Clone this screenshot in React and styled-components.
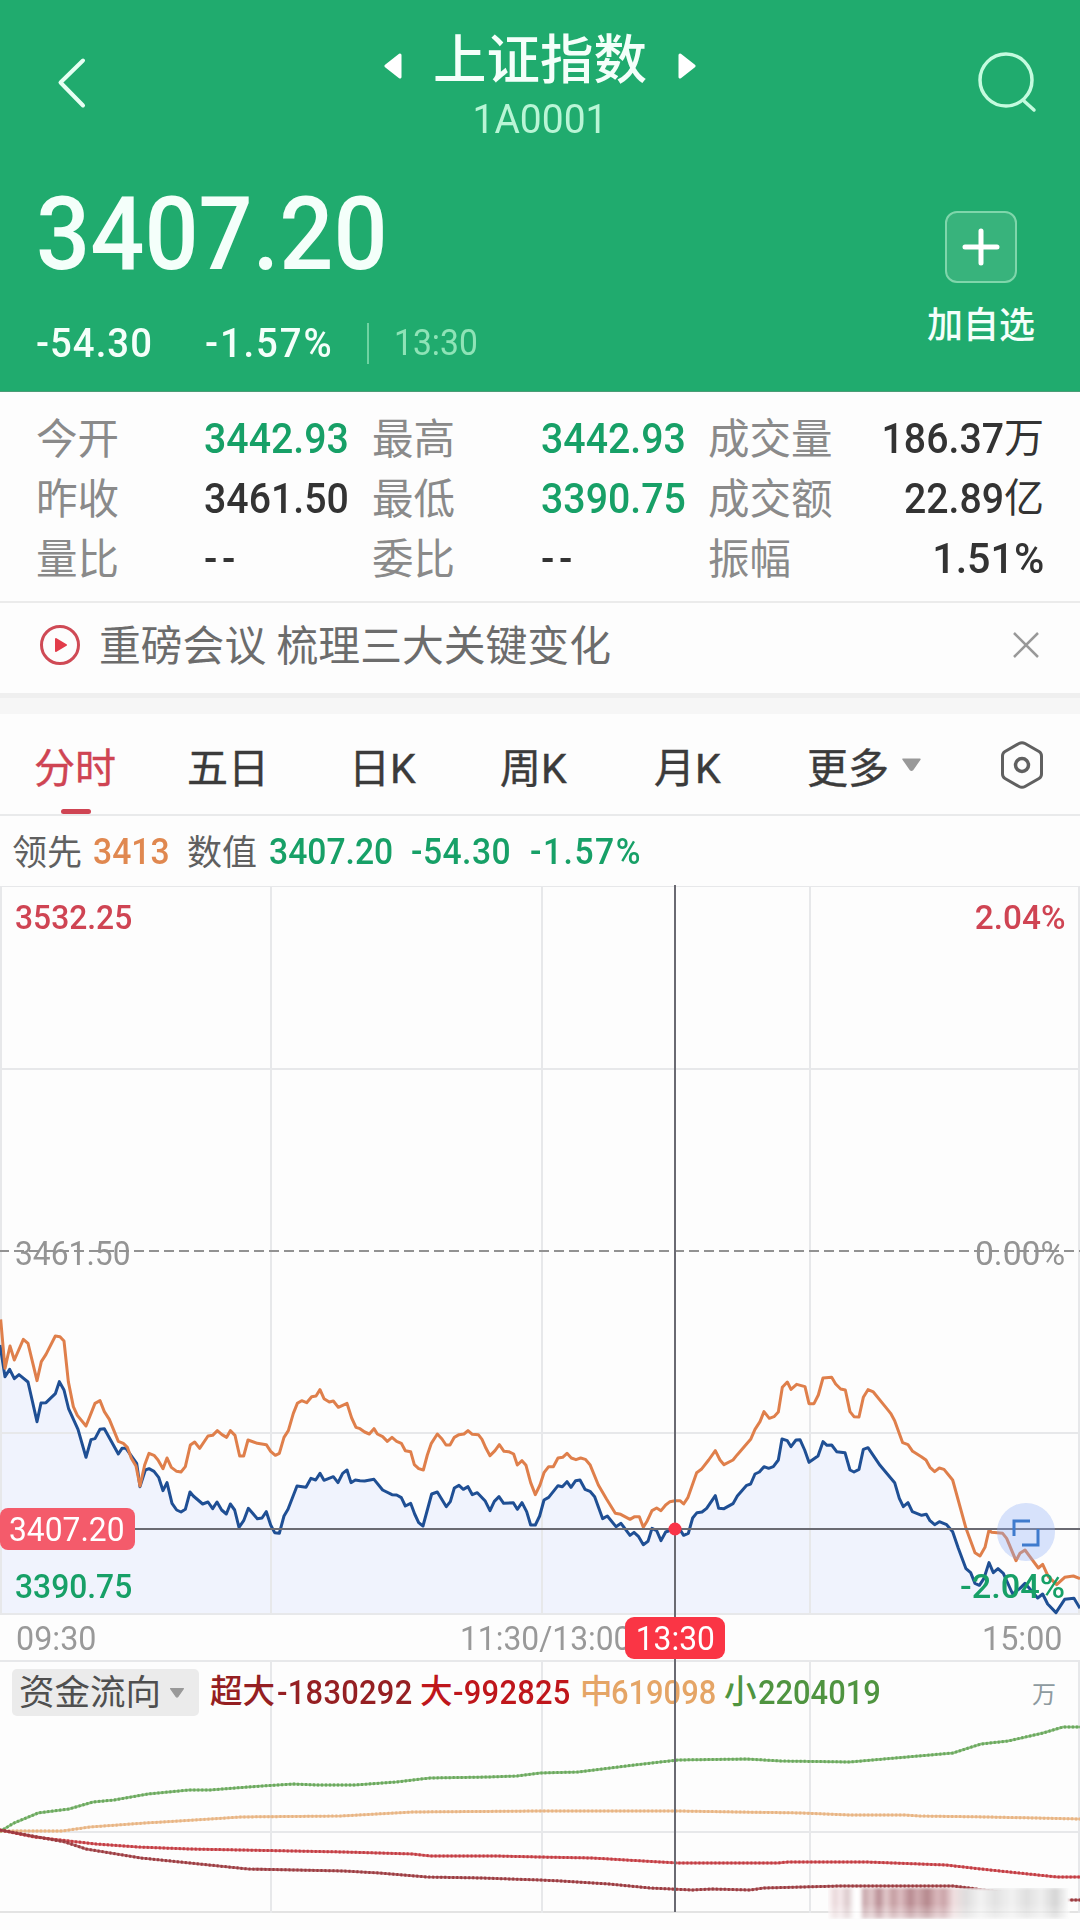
import React from "react";
import styled, { createGlobalStyle, css } from "styled-components";

const GlobalStyle = createGlobalStyle`
  * {
    box-sizing: border-box;
  }
  body {
    margin: 0;
    background: #fdfdfd;
    font-family: Roboto, "Noto Sans CJK SC", sans-serif;
    -webkit-font-smoothing: antialiased;
  }
`;

const colors = {
  green: "#20ab6e",
  down: "#17a067",
  up: "#cf4453",
  red: "#fa3545",
  text: "#333",
  gray: "#8a8a8a",
  orange: "#e08850",
  blue: "#1f4f94",
  line: "#e7e8ea",
};

const Page = styled.main`
  width: 1080px;
  height: 1930px;
  overflow: hidden;
  background: #fdfdfd;
`;

// 숫자 narrow digits, close to DIN
const Num = styled.span`
  display: block;
  font-family: Roboto, sans-serif;
  font-size: ${(p) => p.$size || 42}px;
  font-weight: ${(p) => p.$weight || 500};
  letter-spacing: ${(p) => p.$gap || 0}px;
  line-height: 1;
  white-space: nowrap;
  color: ${(p) => p.$color || "inherit"};
  transform: scaleX(${(p) => p.$scale || 0.935});
  transform-origin: ${(p) => p.$origin || "left"} center;
`;

/* ---------- header ---------- */
const Header = styled.header`
  height: 392px;
  background: ${colors.green};
  border-bottom: 1px solid #4b9c76;
  color: #f4fffa;
`;

const NavBar = styled.div`
  display: grid;
  grid-template-columns: 384px 312px 384px;
  height: 162px;
`;

const BackIcon = styled.svg`
  margin: 56px 0 0 54px;
`;

const SearchIcon = styled.svg`
  margin: 48px 0 0 282px;
`;

const TitleBlock = styled.div`
  padding-top: 28px;
  text-align: center;
`;

const TitleRow = styled.div`
  display: flex;
  align-items: center;
  justify-content: space-between;
  height: 66px;

  svg {
    margin-top: 10px;
  }
`;

const Title = styled.h1`
  margin: 0;
  font-size: 53.5px;
  font-weight: 500;
  line-height: 66px;
`;

const Code = styled.div`
  display: flex;
  justify-content: center;
  margin-top: 5px;
  color: #b9f5d6;
`;

const PriceArea = styled.div`
  display: flex;
  justify-content: space-between;
  padding: 0 38px 0 36px;
`;

const Price = styled.div`
  height: 159px;
  padding-top: 21px;
`;

const ChangeRow = styled.div`
  display: grid;
  grid-template-columns: 169px 162px 27px auto;
  align-items: center;
  height: 44px;
`;

const Divider = styled.i`
  width: 2px;
  height: 41px;
  background: #6fd3a2;
`;

const AddWatch = styled.div`
  display: flex;
  flex-direction: column;
  align-items: center;
  width: 122px;
  padding-top: 49px;
  font-size: 36px;
  font-weight: 500;
  line-height: 48px;
`;

const AddBox = styled.div`
  display: flex;
  align-items: center;
  justify-content: center;
  width: 72px;
  height: 72px;
  margin-bottom: 19px;
  border: 2px solid #7fd6ab;
  border-radius: 12px;
  background: #38b37c;
`;

/* ---------- stats ---------- */
const Stats = styled.section`
  display: grid;
  grid-template-columns: 168px 168px 169px 167px 135px 201px;
  grid-template-rows: repeat(3, 60px);
  align-items: center;
  height: 211px;
  padding: 17px 36px 0;
  border-bottom: 2px solid #ebebeb;
`;

const StatLabel = styled.span`
  padding-top: 2px;
  font-size: 41.5px;
  line-height: 60px;
  color: ${colors.gray};
`;

const StatValue = styled.div`
  display: flex;
  align-items: center;
  justify-content: ${(p) => (p.$right ? "flex-end" : "flex-start")};
  height: 60px;
  font-size: 40px;
  line-height: 60px;
  color: ${(p) => (p.$down ? colors.down : colors.text)};
`;

const Notice = styled.section`
  display: flex;
  align-items: center;
  height: 90px;
  padding: 0 40px 7px 39px;
`;

const NoticeText = styled.p`
  flex: 1;
  margin: 0 0 0 18px;
  padding-top: 5px;
  font-size: 41.8px;
  line-height: 60px;
  color: #6c6c6c;
`;

const Band = styled.div`
  height: 21px;
  border-top: 5px solid #efefef;
  background: #f6f6f6;
`;

/* ---------- tabs ---------- */
const Tabs = styled.nav`
  display: grid;
  grid-template-columns: 153px 162px 151px 154px 153px 193px 44px;
  align-items: center;
  height: 102px;
  padding-left: 34px;
  border-bottom: 2px solid #e9eaeb;

  > svg {
    margin-top: 2px;
  }
`;

const Tab = styled.div`
  position: relative;
  display: flex;
  align-items: center;
  height: 100px;
  padding-top: 2px;
  font-size: 41px;
  font-weight: 400;
  color: #3b3b3b;
  -webkit-text-stroke: 0.4px currentColor;

  ${(p) =>
    p.$active &&
    css`
      color: ${colors.up};
      &::after {
        content: "";
        position: absolute;
        left: 27px;
        bottom: 0;
        width: 30px;
        height: 5px;
        border-radius: 3px;
        background: ${colors.up};
      }
    `}

  svg {
    margin-left: 12px;
  }
`;

const InfoRow = styled.div`
  display: grid;
  grid-template-columns: 81px 94px 82px 142px 119px auto;
  align-items: center;
  height: 70px;
  padding: 1px 0 0 12px;
  font-size: 35px;
  color: #606060;
`;

const InfoLabel = styled.span`
  padding-bottom: 4px;
`;

/* ---------- charts ---------- */
const Charts = styled.section`
  position: relative;
`;

const MinuteChart = styled.div`
  position: relative;
  height: 729px;

  > svg {
    position: relative;
    display: block;
  }
`;

const AxisLabel = styled.div`
  position: absolute;
  top: ${(p) => p.$top}px;
  ${(p) => (p.$right ? "right: 15px;" : "left: 15px;")}
`;

const PriceBadge = styled.div`
  position: absolute;
  left: 0;
  top: 622px;
  display: flex;
  align-items: center;
  width: 135px;
  height: 42px;
  padding-left: 9px;
  border-radius: 8px;
  background: #f45b6b;
  color: #fff;
`;

const TimeAxis = styled.div`
  display: grid;
  grid-template-columns: 444px 1fr 98px;
  align-items: center;
  height: 47px;
  padding: 0 0 0 16px;
  border-bottom: 2px solid ${colors.line};
  color: #999;
`;

const TimeBadge = styled.div`
  position: absolute;
  left: 625px;
  top: 731px;
  display: flex;
  align-items: center;
  justify-content: center;
  width: 100px;
  height: 42px;
  border-radius: 9px;
  background: ${colors.red};
  color: #fff;
`;

const CrossLine = styled.div`
  position: absolute;
  left: 674px;
  top: -1px;
  width: 2px;
  height: 1027px;
  background: #6a6a72;
`;

const FundPanel = styled.div`
  position: relative;
  height: 251px;
  padding: 7px 0 0 12px;
  border-bottom: 2px solid #e3e3e3;
`;

const FundPlot = styled.svg`
  position: absolute;
  left: 0;
  top: 0;
`;

const FundHead = styled.div`
  position: relative;
  display: grid;
  grid-template-columns: 198px 67px 143px 33px 127px 31px 113px 34px 274px auto;
  align-items: center;
  height: 47px;
  font-size: 32.5px;
`;

const FundName = styled.div`
  display: flex;
  align-items: center;
  justify-content: space-between;
  width: 187px;
  height: 47px;
  padding: 1px 14px 0 7px;
  border-radius: 5px;
  background: #ebebeb;
  font-size: 35.5px;
  line-height: 47px;
  color: #4f4f4f;
`;

const FundLabel = styled.span`
  color: ${(p) => p.$color};
  font-weight: 500;
  line-height: 47px;
`;

const Unit = styled.span`
  font-size: 24px;
  color: #8d9a9f;
`;

const Smudge = styled.div`
  position: absolute;
  left: 828px;
  top: 226px;
  width: 242px;
  height: 31px;
  filter: blur(1.5px);
  mask-image: linear-gradient(#000 50%, rgba(0, 0, 0, 0.5));
  background: linear-gradient(
    90deg,
    #fdf8f8 0,
    #e9d8da 3%,
    #f6eaec 5%,
    #dccacc 8%,
    #fff 11%,
    #fff 13%,
    #c9a9ad 15%,
    #e0c6c9 18%,
    #b98f95 21%,
    #e2c9cb 24%,
    #c59ea2 27%,
    #dcbcc0 30%,
    #b88b91 34%,
    #cfaaae 37%,
    #b5888d 41%,
    #d9b7bb 45%,
    #cba5a9 48%,
    #f0dfe0 52%,
    #dedddd 57%,
    #f2f2f2 63%,
    #e2e2e2 69%,
    #f1f1f1 76%,
    #dfdfdf 82%,
    #efefef 88%,
    #d5d5d5 94%,
    #fff 100%
  );
`;

const stats = [
  ["今开", "3442.93", true, "最高", "3442.93", true, "成交量", "186.37", "万"],
  ["昨收", "3461.50", false, "最低", "3390.75", true, "成交额", "22.89", "亿"],
  ["量比", "--", false, "委比", "--", false, "振幅", "1.51%", ""],
];

// one unit is a third of a pixel
const priceLine =
  "0,345 15,440 29,418 43,446 57,434 84,456 111,575 123,519 138,518 166,491 178,455 192,480 206,537 234,598 258,682 273,629 285,626 300,598 313,596 355,672 366,655 378,655 410,700 420,770 436,720 447,716 462,724 476,742 489,782 501,758 516,820 530,840 543,846 556,838 570,786 580,798 608,822 624,816 638,836 651,816 665,840 679,852 691,822 704,840 717,892 731,872 745,835 772,866 786,864 799,845 812,885 824,908 838,910 852,858 864,838 891,768 918,772 933,745 947,750 960,730 972,751 1000,740 1014,758 1028,730 1041,720 1053,758 1066,750 1080,752 " +
  "1094,753 1122,748 1148,780 1176,794 1190,795 1204,803 1216,828 1232,820 1244,852 1256,878 1269,888 1295,792 1312,786 1339,830 1351,815 1363,774 1377,766 1390,778 1404,770 1417,794 1432,788 1455,812 1470,842 1483,814 1497,800 1511,820 1540,818 1552,838 1566,818 1580,845 1592,885 1606,885 1619,858 1632,810 1646,802 1674,767 1687,770 1701,755 1713,772 1727,752 1740,750 1755,778 1770,784 1784,800 1808,866 1822,858 1848,890 1863,880 1890,916 1902,907 1916,920 1930,944 1944,934 1956,895 1970,902 1983,932 1997,906 2025,896 2038,896 2051,916 2065,910 2078,864 2091,848 2106,846 2120,835 2146,797 2156,835 " +
  "2172,836 2199,821 2212,798 2240,766 2252,762 2265,732 2278,726 2292,710 2306,715 2320,710 2335,690 2346,627 2362,632 2373,650 2388,630 2400,629 2414,660 2427,697 2454,678 2469,635 2481,646 2495,645 2510,665 2535,668 2550,720 2562,726 2577,718 2590,658 2604,653 2640,706 2684,758 2698,805 2710,830 2724,818 2737,845 2765,856 2779,853 2790,872 2804,884 2818,875 2840,884 2858,905 2875,955 2898,1016 2912,1028 2925,1060 2938,1066 2952,1045 2967,998 2980,1028 2994,1016 3010,1030 3038,1092 3060,1075 3075,1060 3113,1104 3128,1092 3143,1122 3168,1148 3194,1108 3222,1105 3240,1135";

const leadLine =
  "2,268 15,415 30,348 43,390 70,328 84,340 111,452 124,395 138,373 166,318 180,320 192,333 205,455 220,530 232,556 258,588 285,520 300,512 313,545 328,568 355,634 370,640 382,652 394,685 408,708 420,768 434,705 447,670 462,676 474,690 489,716 501,684 514,712 530,724 543,726 556,710 571,645 584,636 599,655 624,618 638,616 652,602 666,614 680,622 691,602 705,616 719,678 731,678 744,630 772,640 799,644 812,664 826,676 838,670 852,622 865,602 880,550 892,520 905,512 920,518 935,500 948,498 960,479 972,506 988,516 1000,513 1015,532 1041,520 1055,564 1068,592 1080,596 " +
  "1094,606 1108,612 1122,596 1132,612 1148,620 1162,634 1176,622 1190,634 1204,640 1216,662 1232,665 1243,704 1256,716 1270,720 1282,675 1294,640 1312,612 1326,627 1338,645 1350,645 1363,622 1377,614 1392,612 1404,602 1417,613 1435,614 1446,628 1458,655 1470,677 1485,662 1498,644 1512,664 1526,665 1541,672 1552,705 1566,692 1578,706 1592,758 1606,794 1620,765 1632,728 1646,710 1660,710 1674,684 1688,682 1701,670 1714,684 1728,689 1742,684 1756,688 1770,704 1795,765 1820,808 1846,850 1862,853 1890,868 1904,860 1918,860 1930,892 1942,872 1956,842 1970,834 1983,842 1997,825 2010,815 2025,812 2040,812 2051,822 2064,802 2090,728 2104,718 2126,690 2146,662 2160,690 " +
  "2172,704 2199,690 2212,674 2252,628 2265,598 2280,575 2292,545 2308,565 2322,560 2335,546 2347,472 2362,456 2373,478 2390,463 2415,470 2427,521 2442,521 2455,495 2469,444 2495,442 2507,462 2522,477 2536,480 2550,545 2562,560 2577,561 2590,502 2604,479 2620,486 2660,535 2672,550 2684,572 2708,638 2724,644 2738,664 2764,680 2778,690 2790,712 2804,725 2818,714 2832,718 2858,750 2898,895 2925,968 2940,978 2955,952 2967,900 2975,907 3008,910 3020,925 3048,992 3060,970 3075,960 3088,978 3115,1014 3128,1003 3145,1040 3170,1064 3194,1042 3220,1038 3240,1046";

const fundLines = [
  {
    color: "#6aa95c",
    points:
      "0,170 4,167 14,161 38,151 69,147 93,140 114,138 148,132 189,128 210,128 248,125 293,122 317,123 355,123 396,120 430,116 489,115 517,114 540,111 578,110 643,102 678,98 747,97 781,99 850,100 884,97 953,91 981,82 1008,79 1043,71 1063,65 1080,65",
  },
  {
    color: "#e8b482",
    points:
      "0,169 62,169 90,165 145,161 179,159 241,155 341,154 413,150 540,149 678,149 802,151 850,153 905,153 919,154 988,155 1080,157",
  },
  {
    color: "#c43c42",
    points:
      "0,168 34,175 69,179 96,182 138,185 189,187 241,188 344,190 413,192 430,194 496,194 540,195 592,196 643,199 678,201 778,201 788,200 867,200 946,203 981,207 1057,215 1080,215",
  },
  {
    color: "#9c3b40",
    points:
      "0,168 65,180 86,187 141,196 248,207 344,209 379,211 427,215 482,216 540,218 561,219 609,222 650,226 692,228 712,227 750,228 764,226 840,224 953,224 1000,230 1066,238 1080,238",
  },
];

const Chevron = () => (
  <BackIcon width="34" height="54" viewBox="0 0 34 54" fill="none">
    <path
      d="M29 4.500 L6.500 26.500 L29 49.500"
      stroke="#e6fff3"
      strokeWidth="4"
      strokeLinecap="round"
      strokeLinejoin="round"
    />
  </BackIcon>
);

const Triangle = ({ flip }) => (
  <svg width="18" height="28" viewBox="0 0 18 28">
    <path
      d={
        flip
          ? "M2 3 L16 14 L2 25 Z"
          : "M16 3 L2 14 L16 25 Z"
      }
      fill="#fff"
      stroke="#fff"
      strokeWidth="3"
      strokeLinejoin="round"
    />
  </svg>
);

const Caret = ({ w, h }) => (
  <svg width={w} height={h} viewBox="0 0 20 13">
    <path d="M2 1 H18 L11 11 Q10 12 9 11 Z" fill="#999" stroke="#999" strokeWidth="1.500" strokeLinejoin="round" />
  </svg>
);

const App = () => {
  return (
    <Page>
      <GlobalStyle />
      <Header>
        <NavBar>
          <Chevron />
          <TitleBlock>
            <TitleRow>
              <Triangle />
              <Title>上证指数</Title>
              <Triangle flip />
            </TitleRow>
            <Code>
              <Num $size={41} $weight={400} $scale={0.95} $origin="center">
                1A0001
              </Num>
            </Code>
          </TitleBlock>
          <SearchIcon width="66" height="70" viewBox="0 0 66 70" fill="none">
            <circle cx="27" cy="32" r="26" stroke="#c4fbdf" strokeWidth="3.500" transform="translate(1 0)" />
            <path d="M46 53 L56 62" stroke="#c4fbdf" strokeWidth="3.500" strokeLinecap="round" />
          </SearchIcon>
        </NavBar>
        <PriceArea>
          <div>
            <Price>
              <Num $size={102}>3407.20</Num>
            </Price>
            <ChangeRow>
              <Num $size={41} $gap={1.1}>-54.30</Num>
              <Num $size={41} $gap={2}>-1.57%</Num>
              <Divider />
              <Num $size={36} $weight={400} $color="#8fe3b7">
                13:30
              </Num>
            </ChangeRow>
          </div>
          <AddWatch>
            <AddBox>
              <svg width="40" height="40" viewBox="0 0 40 40">
                <path d="M20 4 V36 M4 20 H36" stroke="#fff" strokeWidth="5" strokeLinecap="round" />
              </svg>
            </AddBox>
            加自选
          </AddWatch>
        </PriceArea>
      </Header>

      <Stats>
        {stats.map(([a, av, aDown, b, bv, bDown, c, cv, unit]) => (
          <React.Fragment key={a}>
            <StatLabel>{a}</StatLabel>
            <StatValue $down={aDown}>
              <Num $gap={av === "--" ? 5 : 0}>{av}</Num>
            </StatValue>
            <StatLabel>{b}</StatLabel>
            <StatValue $down={bDown}>
              <Num $gap={bv === "--" ? 5 : 0}>{bv}</Num>
            </StatValue>
            <StatLabel>{c}</StatLabel>
            <StatValue $right>
              <Num $origin="right" $scale={unit ? 0.935 : 0.98}>{cv}</Num>
              {unit}
            </StatValue>
          </React.Fragment>
        ))}
      </Stats>

      <Notice>
        <svg width="42" height="42" viewBox="0 0 42 42" fill="none">
          <circle cx="21" cy="21" r="18.500" stroke="#cf4a55" strokeWidth="3" />
          <path d="M17 15 L27 21 L17 27 Z" fill="#e23c4a" stroke="#e23c4a" strokeWidth="2" strokeLinejoin="round" />
        </svg>
        <NoticeText>重磅会议 梳理三大关键变化</NoticeText>
        <svg width="28" height="28" viewBox="0 0 28 28">
          <path d="M2 2 L26 26 M26 2 L2 26" stroke="#999" strokeWidth="2.500" />
        </svg>
      </Notice>
      <Band />

      <Tabs>
        <Tab $active>分时</Tab>
        <Tab>五日</Tab>
        <Tab>日K</Tab>
        <Tab>周K</Tab>
        <Tab>月K</Tab>
        <Tab>
          更多
          <Caret w={21} h={14} />
        </Tab>
        <svg width="44" height="50" viewBox="0 0 44 50" fill="none">
          <path
            d="M19 3.500 Q22 1.800 25 3.500 L39 11.500 Q41.500 13 41.500 16 V34 Q41.500 37 39 38.500 L25 46.500 Q22 48.200 19 46.500 L5 38.500 Q2.500 37 2.500 34 V16 Q2.500 13 5 11.500 Z"
            stroke="#606060"
            strokeWidth="3"
          />
          <circle cx="22" cy="25" r="6.500" stroke="#606060" strokeWidth="3.500" />
        </svg>
      </Tabs>

      <InfoRow>
        <InfoLabel>领先</InfoLabel>
        <Num $size={36} $color={colors.orange}>
          3413
        </Num>
        <InfoLabel>数值</InfoLabel>
        <Num $size={36} $color={colors.down}>3407.20</Num>
        <Num $size={36} $gap={0.5} $color={colors.down}>-54.30</Num>
        <Num $size={36} $gap={1.6} $color={colors.down}>-1.57%</Num>
      </InfoRow>

      <Charts>
        <MinuteChart>
          <AxisLabel $top={14}>
            <Num $size={34} $color={colors.up}>3532.25</Num>
          </AxisLabel>
          <AxisLabel $top={14} $right>
            <Num $size={34} $color={colors.up} $scale={0.98} $origin="right">2.04%</Num>
          </AxisLabel>
          <AxisLabel $top={350}>
            <Num $size={34} $weight={400} $color="#949494">3461.50</Num>
          </AxisLabel>
          <AxisLabel $top={350} $right>
            <Num $size={34} $weight={400} $color="#949494" $scale={0.99} $origin="right">0.00%</Num>
          </AxisLabel>
          <svg width="1080" height="729" viewBox="0 0 1080 729" fill="none">
            <g transform="translate(0 344) scale(0.33333)">
              <polygon points={`${priceLine} 3240,1155 0,1155`} fill="#dfe6fc" fillOpacity="0.45" />
            </g>
            <g stroke={colors.line} strokeWidth="2">
              <path d="M0 0 H1080 M0 183 H1080 M0 547 H1080 M0 728 H1080" />
              <path d="M1 0 V729 M271 0 V729 M542 0 V729 M810 0 V729 M1079 0 V729" />
            </g>
            <path d="M-1 365 H1080" stroke="#929292" strokeWidth="2" strokeDasharray="10 5" />
            <g transform="translate(0 344) scale(0.33333)" strokeWidth="9" strokeLinejoin="round">
              <polyline points={priceLine} stroke={colors.blue} />
              <polyline points={leadLine} stroke="#df7f4b" />
            </g>
            <path d="M0 643 H1080" stroke="#6a6a72" strokeWidth="2" />
            <circle cx="1026" cy="646" r="29" fill="#8fb0f5" fillOpacity="0.35" />
            <path d="M1014 650 V635 H1030 M1022 659 H1038 V643" stroke="#3f7bcd" strokeWidth="3" />
          </svg>
          <AxisLabel $top={683}>
            <Num $size={34} $color={colors.down}>3390.75</Num>
          </AxisLabel>
          <AxisLabel $top={683} $right>
            <Num $size={34} $color={colors.down} $scale={1.01} $origin="right">-2.04%</Num>
          </AxisLabel>
          <PriceBadge>
            <Num $size={34} $weight={400}>3407.20</Num>
          </PriceBadge>
        </MinuteChart>

        <TimeAxis>
          <Num $size={34} $weight={400} $scale={0.95}>09:30</Num>
          <Num $size={34} $weight={400}>11:30/13:00</Num>
          <Num $size={34} $weight={400} $scale={0.95}>15:00</Num>
        </TimeAxis>

        <FundPanel>
          <FundPlot width="1080" height="251" viewBox="0 0 1080 251" fill="none">
            <path d="M0 170 H1080 M271 0 V251 M542 0 V251 M810 0 V251 M1079 0 V251" stroke={colors.line} strokeWidth="2" />
            {fundLines.map((l) => (
              <g key={l.color} stroke={l.color}>
                <polyline points={l.points} strokeWidth="2.500" strokeOpacity="0.8" />
                <polyline points={l.points} strokeWidth="3" strokeDasharray="2 2" />
              </g>
            ))}
          </FundPlot>
          <FundHead>
            <FundName>
              资金流向
              <Caret w={16} h={12} />
            </FundName>
            <FundLabel $color="#951f22">超大</FundLabel>
            <Num $size={33} $gap={0.3} $color="#951f22">-1830292</Num>
            <FundLabel $color="#bf161b">大</FundLabel>
            <Num $size={33} $gap={0.3} $color="#bf161b">-992825</Num>
            <FundLabel $color="#e5a566">中</FundLabel>
            <Num $size={33} $color="#e5a566">619098</Num>
            <FundLabel $color="#4f9440">小</FundLabel>
            <Num $size={33} $color="#4f9440">2204019</Num>
            <Unit>万</Unit>
          </FundHead>
          <Smudge />
        </FundPanel>

        <CrossLine />
        <svg
          width="14"
          height="14"
          viewBox="0 0 14 14"
          style={{ position: "absolute", left: 668, top: 636 }}
        >
          <circle cx="7" cy="7" r="6.500" fill="#f93347" />
        </svg>
        <TimeBadge>
          <Num $size={34} $weight={400} $origin="center">13:30</Num>
        </TimeBadge>
      </Charts>
    </Page>
  );
};

export default App;
